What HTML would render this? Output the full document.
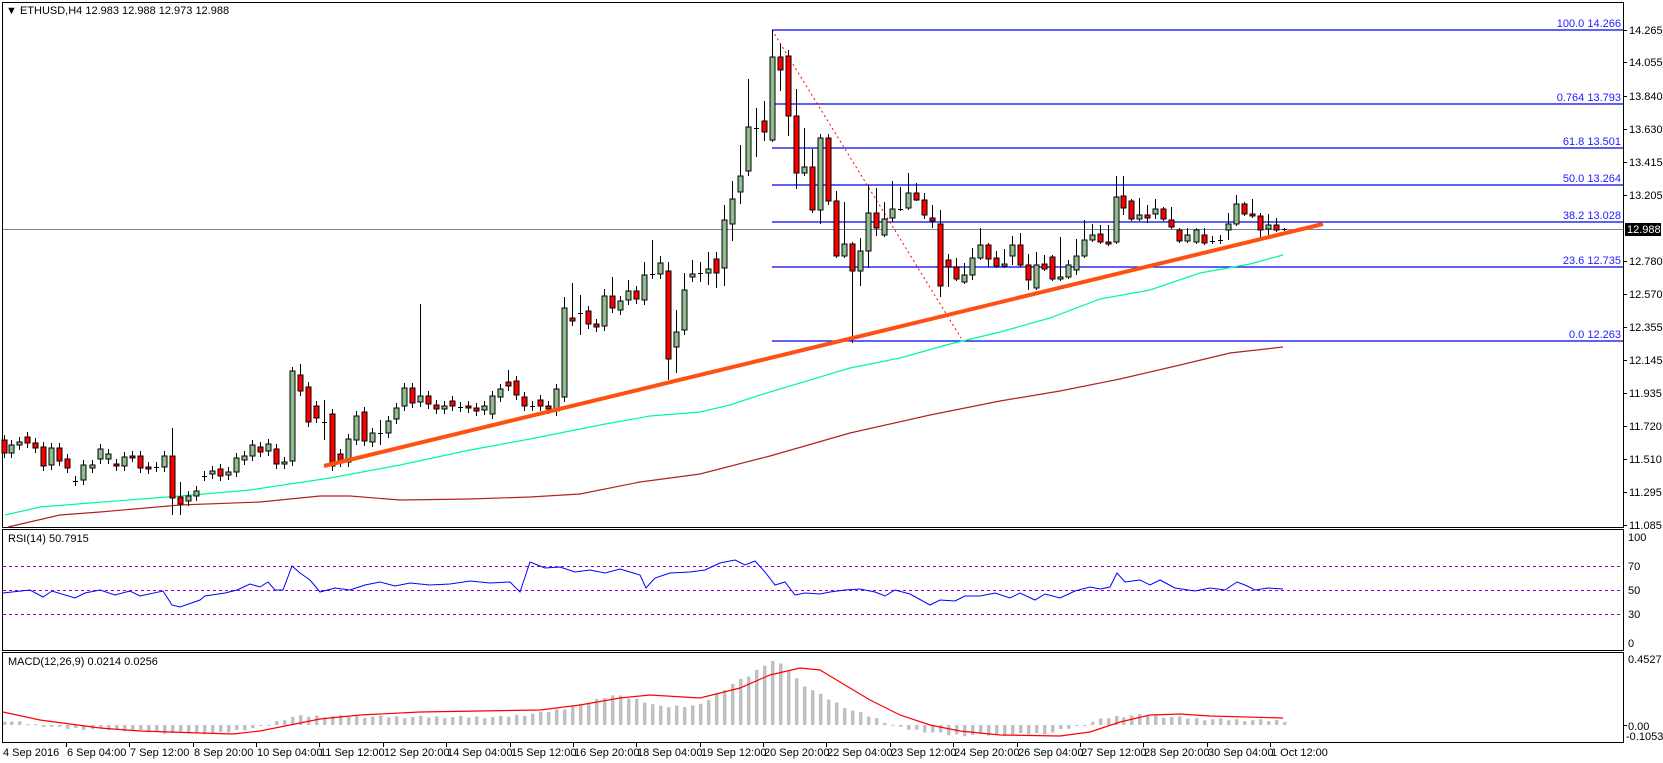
<!DOCTYPE html>
<html><head><meta charset="utf-8"><style>
html,body{margin:0;padding:0;background:#fff;width:1663px;height:763px;overflow:hidden}
svg{display:block}
text{font-family:"Liberation Sans","DejaVu Sans",sans-serif;font-size:11px}
</style></head><body>
<svg id="s" width="1663" height="763" xmlns="http://www.w3.org/2000/svg">
<rect width="1663" height="763" fill="#fff"/>
<g id="g"></g>
<text x="6" y="14" fill="#000">▼ ETHUSD,H4  12.983 12.988 12.973 12.988</text>
<text x="8" y="542" fill="#000">RSI(14) 50.7915</text>
<text x="8" y="665" fill="#000">MACD(12,26,9) 0.0214 0.0256</text>
</svg>
<script>
var g=document.getElementById('g');var h='';
function L(a,c,w,extra){h+='<polyline fill="none" stroke="'+c+'" stroke-width="'+w+'" '+(extra||'')+' points="'+a.map(function(p){return p[0]+','+p[1]}).join(' ')+'"/>';}
function T(x,y,t,c,anc){h+='<text x="'+x+'" y="'+y+'" fill="'+(c||'#000')+'"'+(anc?' text-anchor="'+anc+'"':'')+'>'+t+'</text>';}
h+='<rect x="2.5" y="2.5" width="1621" height="525" fill="none" stroke="#000"/>';
h+='<rect x="2.5" y="529.5" width="1621" height="121" fill="none" stroke="#000"/>';
h+='<rect x="2.5" y="652.5" width="1621" height="90" fill="none" stroke="#000"/>';
var ax=[[30,'14.265'],[62,'14.055'],[96,'13.840'],[129,'13.630'],[162,'13.415'],[195,'13.205'],[261,'12.780'],[294,'12.570'],[327,'12.355'],[360,'12.145'],[393,'11.935'],[426,'11.720'],[459,'11.510'],[492,'11.295'],[525,'11.085']];
ax.forEach(function(a){h+='<line x1="1623" x2="1627" y1="'+a[0]+'.5" y2="'+a[0]+'.5" stroke="#000"/>';T(1629,a[0]+4,a[1]);});
h+='<line x1="3" x2="1623" y1="229.5" y2="229.5" stroke="#778899"/>';
h+='<rect x="1625" y="223" width="36" height="13" fill="#000"/>';T(1627,233,'12.988','#fff');
var fb=[[30,'100.0  14.266'],[104,'0.764  13.793'],[148,'61.8  13.501'],[185,'50.0 13.264'],[222,'38.2  13.028'],[267,'23.6  12.735'],[341,'0.0  12.263']];
fb.forEach(function(f){h+='<line x1="772" x2="1623" y1="'+f[0]+'" y2="'+f[0]+'" stroke="#0000ee" stroke-width="1.3"/>';T(1621,f[0]-3,f[1],'#2020ff','end');});
h+='<line x1="772" y1="30" x2="961" y2="338" stroke="#ff0000" stroke-dasharray="2,3"/>';
L([[5,515],[40,507],[90,503],[180,496],[250,490],[330,478],[400,465],[470,450],[530,439],[600,425],[650,416],[700,412],[730,405],[760,395],[800,383],[850,368],[900,358],[950,344],[1000,332],[1050,318],[1100,299],[1150,290],[1200,273],[1250,264],[1283,255]],'#00fa9a',1.2);
L([[8,527],[60,515],[100,512],[180,505],[260,502],[320,496],[350,496],[400,500],[470,499],[530,497],[580,494],[640,482],[700,474],[770,456],[850,433],[930,415],[1000,401],[1060,391],[1120,379],[1180,365],[1230,353],[1283,347]],'#b22222',1.2);
var C=[[4,'r',440,453],[11,'g',445,453],[19,'g',442,445],[27,'r',437,443],[35,'r',443,448],[43,'r',447,466],[51,'g',448,465],[59,'r',448,461],[67,'r',459,468],[75,'d',481,481],[83,'g',465,480],[92,'g',465,468],[100,'g',449,459],[108,'g',454,459],[116,'r',464,466],[124,'g',457,466],[132,'r',456,457],[140,'r',456,468],[148,'r',467,469],[156,'d',467,467],[164,'g',456,467],[172,'r',456,498,428,515],[180,'r',497,504,482,515],[188,'g',496,501],[196,'g',491,496],[204,'d',476,476],[212,'g',471,474],[220,'r',469,476],[228,'g',472,475],[236,'g',458,472],[244,'g',456,460],[252,'g',445,456],[260,'r',447,452],[268,'g',444,451],[276,'r',449,464],[284,'g',462,464],[292,'g',371,461,367],[300,'r',375,391,364],[308,'r',387,422],[316,'r',406,418],[324,'d',422,422,400,440],[332,'r',414,466],[340,'r',454,462],[348,'g',439,462],[356,'g',416,440],[364,'r',412,441],[372,'g',433,442],[380,'d',433,433,420,445],[388,'g',421,433],[396,'g',408,419],[404,'g',388,406],[412,'r',388,403],[420,'g',396,402,304],[428,'r',396,404],[436,'r',405,409],[444,'g',406,409],[452,'r',401,406],[460,'d',407,407],[468,'r',406,408],[476,'r',408,411],[484,'g',406,410],[492,'g',396,414],[500,'g',389,397],[508,'r',382,386,370],[516,'r',381,395],[524,'r',397,406],[532,'d',406,406],[540,'r',400,406],[548,'r',406,409],[556,'g',389,411],[564,'g',308,397,297],[572,'r',318,321,283],[580,'d',313,313,295,335],[588,'r',311,324],[596,'r',324,327],[604,'g',296,326,289],[612,'r',296,308,277],[620,'g',301,310],[628,'g',291,300,280],[636,'r',291,299],[644,'g',275,300,262],[652,'d',274,274,240],[660,'g',263,274,256],[668,'r',271,359,262,380],[676,'g',332,347,310,373],[684,'g',290,330,273],[692,'g',274,277,260],
[700,'d',273,273,262,282],[708,'g',269,273,252,285],[716,'r',259,273,252,288],[724,'g',220,268,205,286],[732,'g',199,224,181,241],[740,'g',176,192,145,204],[748,'g',127,171,79,176],[756,'d',128,128,108,157],[764,'r',121,132,101,141],[772,'g',57,140,30,142],[780,'r',57,70,44,91],[788,'r',56,116,50,136],[796,'r',116,173,89,189],[804,'g',167,173,128,176],[812,'r',167,210,149,213],[820,'g',138,210,134,224],[828,'r',138,201,134,205],[836,'r',201,256,191,258],[844,'g',244,256,202,258],[852,'r',244,271,242,343],[860,'g',251,271,238,286],[868,'g',213,251,185,268],[876,'r',213,228,188,236],[884,'g',219,235,202,237],[892,'g',209,218,181,222],[900,'d',209,209,187,211],[908,'g',193,208,173,210],[916,'r',193,200,183,201],[924,'r',200,215,193,219],[932,'r',218,221,205,228],[940,'r',224,286,210,297],[948,'r',260,267,254,287],[956,'r',267,279,258,281],[964,'g',275,282,263,284],[972,'g',258,275,248,280],[980,'g',245,258,228,260],[988,'r',245,259,243,267],[996,'r',258,266,251,268],[1004,'g',264,266,249,268],[1012,'g',245,256,236,265],[1020,'r',245,265,233,267],[1028,'r',265,280,254,290],[1036,'g',265,288,252,290],[1044,'r',264,269,255,271],[1052,'r',257,279,255,281],[1060,'g',277,279,237,281],[1068,'g',265,277,260,279],[1076,'g',256,270,239,275],[1084,'g',240,256,220,258],[1092,'g',235,240,224,242],[1100,'r',234,242,225,244],[1108,'r',242,244,225,246],[1116,'g',197,242,176,244],[1123,'r',196,208,176,215],[1131,'r',201,219,199,221],[1139,'g',215,219,198,221],[1147,'r',215,218,205,223],[1155,'g',209,214,199,219],[1163,'r',209,219,207,221],[1171,'r',220,227,207,229],[1179,'r',230,241,228,243],[1187,'g',235,241,228,243],[1196,'g',230,242,228,244],[1204,'r',235,243,228,245],[1212,'d',241,241,236,244],[1220,'d',240,240,235,244],[1228,'g',224,230,213,240],[1236,'g',204,224,195,226],[1244,'r',204,214,202,216],[1252,'r',214,216,199,218],[1260,'r',216,230,213,239],[1268,'g',225,229,214,235],[1276,'r',225,230,218,232],[1284,'d',229,229,228,231]];
C.forEach(function(c){var x=c[0],t=c[2],b=c[3],hi=c[4]||t-5,lo=c[5]||b+5;
h+='<line x1="'+(x+.5)+'" x2="'+(x+.5)+'" y1="'+hi+'" y2="'+lo+'" stroke="#000"/>';
if(c[1]=='d'){h+='<line x1="'+(x-2)+'" x2="'+(x+3)+'" y1="'+(t+.5)+'" y2="'+(t+.5)+'" stroke="#000"/>';}
else{h+='<rect x="'+(x-2)+'" y="'+t+'" width="5" height="'+Math.max(b-t,2)+'" fill="'+(c[1]=='g'?'#8fbc8f':'#ff0000')+'" stroke="#000"/>';}});
h+='<line x1="324" y1="466" x2="1323" y2="224" stroke="#ff5014" stroke-width="4"/>';
[566,590,614].forEach(function(y){h+='<line x1="3" x2="1623" y1="'+y+'.5" y2="'+y+'.5" stroke="#9400d3" stroke-dasharray="3,3"/>';});
T(1628,541,'100');T(1628,570,'70');T(1628,594,'50');T(1628,618,'30');T(1628,647,'0');
L([[3,593],[30,590],[43,597],[52,591],[75,598],[85,593],[100,590],[115,595],[130,591],[140,596],[163,591],[172,605],[180,607],[200,600],[205,596],[225,593],[237,590],[250,584],[260,587],[268,582],[275,590],[283,590],[292,566],[300,573],[310,580],[320,592],[335,588],[350,590],[365,585],[380,582],[395,586],[410,583],[430,585],[450,584],[470,581],[490,583],[510,582],[520,592],[530,562],[545,568],[560,567],[575,572],[590,570],[605,573],[620,569],[630,572],[640,575],[646,588],[655,578],[670,573],[690,572],[705,570],[720,563],[735,560],[745,565],[755,561],[765,572],[775,585],[785,582],[795,595],[805,593],[820,594],[830,592],[845,590],[860,589],[875,592],[885,596],[895,590],[910,594],[930,605],[940,600],[955,601],[965,596],[980,596],[995,593],[1010,598],[1020,593],[1035,600],[1045,594],[1060,598],[1075,591],[1090,587],[1100,589],[1110,587],[1117,573],[1125,582],[1140,580],[1150,585],[1160,580],[1175,588],[1195,591],[1210,588],[1225,590],[1237,582],[1245,585],[1255,590],[1268,588],[1283,589]],'#0000ff',1);
T(1628,663,'0.4527');T(1628,730,'0.00');T(1626,740,'-0.1053');
h+='<line x1="1623" x2="1627" y1="725.5" y2="725.5" stroke="#000"/>';
var K=[[0,5],[60,-3],[120,-5],[170,-8],[220,-8],[260,-2],[290,8],[310,9],[400,8],[500,8],[540,12],[580,20],[610,30],[640,25],[660,18],[700,20],[730,40],[750,50],[770,65],[785,58],[800,42],[820,30],[850,15],[880,5],[900,-3],[950,-10],[1000,-10],[1050,-8],[1080,0],[1110,8],[1140,10],[1170,8],[1200,6],[1290,4]];
function kv(x){for(var i=0;i<K.length-1;i++){if(x>=K[i][0]&&x<=K[i+1][0]){var f=(x-K[i][0])/(K[i+1][0]-K[i][0]);return K[i][1]+f*(K[i+1][1]-K[i][1]);}}return 4;}
C.forEach(function(c,i){var v=kv(c[0])+((i*37)%5-2)*0.6;var y0=725,y1=725-v;h+='<rect x="'+(c[0]-1)+'" y="'+Math.min(y0,y1)+'" width="3.5" height="'+Math.max(Math.abs(v),1)+'" fill="#c0c0c0"/>';});
L([[3,712],[40,720],[100,728],[140,731],[200,733],[233,734],[260,731],[290,725],[320,719],[360,715],[420,712],[480,711],[540,710],[580,705],[620,698],[650,695],[700,698],[740,688],[770,675],[800,668],[820,670],[840,682],[870,700],[900,715],[930,725],[960,731],[1000,735],[1060,736],[1090,732],[1120,722],[1150,715],[1180,714],[1210,716],[1283,718]],'#ff0000',1.2);
var tl=['6 Sep 04:00','7 Sep 12:00','8 Sep 20:00','10 Sep 04:00','11 Sep 12:00','12 Sep 20:00','14 Sep 04:00','15 Sep 12:00','16 Sep 20:00','18 Sep 04:00','19 Sep 12:00','20 Sep 20:00','22 Sep 04:00','23 Sep 12:00','24 Sep 20:00','26 Sep 04:00','27 Sep 12:00','28 Sep 20:00','30 Sep 04:00','1 Oct 12:00'];
T(3,756,'4 Sep 2016');
tl.forEach(function(t,i){var x=Math.round(66+i*63.37);h+='<line x1="'+(x+.5)+'" x2="'+(x+.5)+'" y1="742" y2="747" stroke="#000"/>';T(x+1,756,t);});
g.innerHTML=h;
</script>
</body></html>
